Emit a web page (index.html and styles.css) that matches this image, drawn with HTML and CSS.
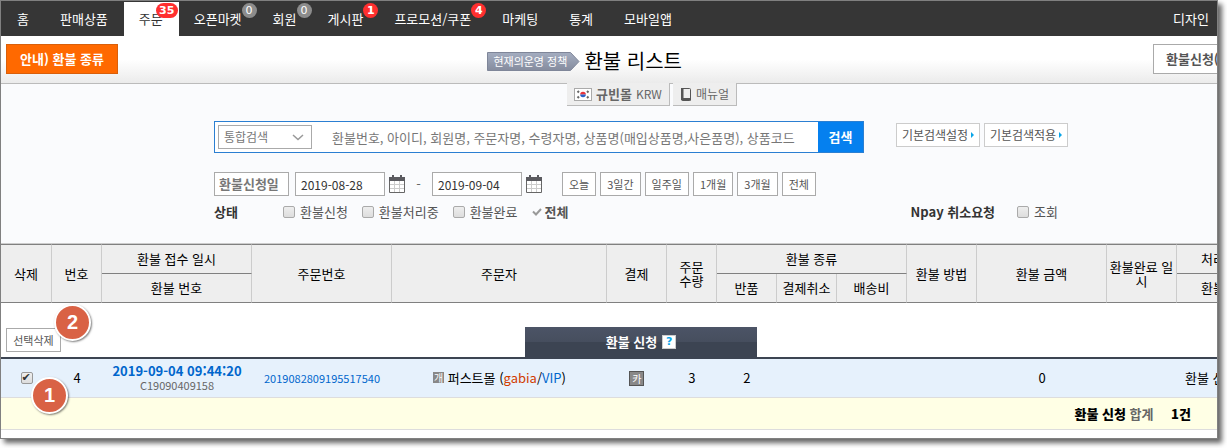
FILE: index.html
```html
<!DOCTYPE html>
<html lang="ko">
<head>
<meta charset="utf-8">
<title>환불 리스트</title>
<link rel="stylesheet" href="styles.css">
</head>
<body>
<div class="frame">
<div class="page">
    <nav class="gnb">
        <a href="#">홈</a>
        <a href="#">판매상품</a>
        <a href="#" class="on">주문<span class="badge red wide">35</span></a>
        <a href="#">오픈마켓<span class="badge">0</span></a>
        <a href="#">회원<span class="badge">0</span></a>
        <a href="#">게시판<span class="badge red">1</span></a>
        <a href="#">프로모션/쿠폰<span class="badge red">4</span></a>
        <a href="#">마케팅</a>
        <a href="#">통계</a>
        <a href="#">모바일앱</a>
        <a href="#" class="design">디자인</a>
    </nav>

    <header class="title-bar">
        <div><button type="button" class="btn-guide">안내) 환불 종류</button></div>
        <div class="title">
            <a href="#" class="policy">
                <svg width="93" height="19" viewBox="0 0 93 19">
                    <defs>
                        <linearGradient id="tag" x1="0" y1="0" x2="0" y2="1">
                            <stop offset="0" stop-color="#a4adc0"/>
                            <stop offset="1" stop-color="#858c9e"/>
                        </linearGradient>
                    </defs>
                    <path d="M.5 .5H83.500L92 9.500L83.500 18.500H.5Z" fill="url(#tag)" stroke="#7f8699"/>
                </svg>
                <span>현재의운영 정책</span>
            </a>
            <h1>환불 리스트</h1>
        </div>
        <div><button type="button" class="btn-refund">환불신청(</button></div>
    </header>

    <section class="filter">
        <div class="tabs">
            <a href="#">
                <svg width="18" height="13" viewBox="0 0 18 13">
                    <rect x=".5" y=".5" width="17" height="12" fill="#fff" stroke="#aaa"/>
                    <path d="M6.200 6.500a2.800 2.800 0 0 1 5.600 0z" fill="#e8343c"/>
                    <path d="M6.200 6.500a2.800 2.800 0 0 0 5.600 0z" fill="#2a62c8"/>
                    <path d="M3.500 4.500L5 3M13 3L14.500 4.500M3.500 8.500L5 10M13 10L14.500 8.500" stroke="#666" stroke-width="2"/>
                </svg>
                <b>규빈몰</b> KRW
            </a>
            <a href="#">
                <svg width="12" height="13" viewBox="0 0 12 13">
                    <rect x="1.500" y=".5" width="9" height="12" rx="1" fill="none" stroke="#555"/>
                    <path d="M1 0h2.500v12H1zM2 10h9v2.500H2z" fill="#555"/>
                </svg>
                매뉴얼
            </a>
        </div>

        <form class="search">
            <div class="row row-keyword">
                <div class="keyword">
                    <span class="pick">
                        <select aria-label="검색 구분"><option>통합검색</option></select>
                        <svg width="12" height="7" viewBox="0 0 12 7"><path d="M1 1l5 4.500L11 1" fill="none" stroke="#999" stroke-width="1.500"/></svg>
                    </span>
                    <input type="text" aria-label="검색어" placeholder="환불번호, 아이디, 회원명, 주문자명, 수령자명, 상품명(매입상품명,사은품명), 상품코드">
                    <button type="button">검색</button>
                </div>
                <div class="presets">
                    <button type="button">기본검색설정<i></i></button>
                    <button type="button">기본검색적용<i></i></button>
                </div>
            </div>

            <div class="row row-date">
                <select class="date-type" aria-label="기간 기준"><option>환불신청일</option></select>
                <div class="date">
                    <input type="text" value="2019-08-28" aria-label="시작일">
                    <svg width="16" height="18" viewBox="0 0 16 18">
                        <path d="M.5 2.500h15v15H.5z" fill="#fff" stroke="#666"/>
                        <path d="M5.500 6v11M10.500 6v11M1 9.500h14M1 13.500h14" stroke="#ccc"/>
                        <path d="M0 2h16v4H0zM3 0h2v3H3zM11 0h2v3h-2z" fill="#5a5a5f"/>
                    </svg>
                </div>
                <span class="dash">-</span>
                <div class="date">
                    <input type="text" value="2019-09-04" aria-label="종료일">
                    <svg width="16" height="18" viewBox="0 0 16 18">
                        <path d="M.5 2.500h15v15H.5z" fill="#fff" stroke="#666"/>
                        <path d="M5.500 6v11M10.500 6v11M1 9.500h14M1 13.500h14" stroke="#ccc"/>
                        <path d="M0 2h16v4H0zM3 0h2v3H3zM11 0h2v3h-2z" fill="#5a5a5f"/>
                    </svg>
                </div>
                <div class="period">
                    <button type="button">오늘</button>
                    <button type="button">3일간</button>
                    <button type="button">일주일</button>
                    <button type="button">1개월</button>
                    <button type="button">3개월</button>
                    <button type="button">전체</button>
                </div>
            </div>

            <div class="row row-status">
                <b class="name">상태</b>
                <div class="checks">
                    <label><input type="checkbox">환불신청</label>
                    <label><input type="checkbox">환불처리중</label>
                    <label><input type="checkbox">환불완료</label>
                    <a href="#" class="all"><svg width="10" height="8" viewBox="0 0 10 8"><path d="M1 3.500L4 6.500L9 1" fill="none" stroke="#999" stroke-width="2"/></svg>전체</a>
                </div>
                <div class="npay">
                    <b>Npay 취소요청</b>
                    <label><input type="checkbox">조회</label>
                </div>
            </div>
        </form>
    </section>

    <table class="list">
        <colgroup>
            <col class="c-del"><col class="c50"><col class="c-reg"><col class="c-order"><col><col class="c60"><col class="c50">
            <col class="c60"><col class="c60"><col class="c70"><col class="c70"><col class="c-price"><col class="c70"><col class="c-state">
        </colgroup>
        <thead>
            <tr>
                <th rowspan="2">삭제</th>
                <th rowspan="2">번호</th>
                <th class="upper">환불 접수 일시</th>
                <th rowspan="2">주문번호</th>
                <th rowspan="2">주문자</th>
                <th rowspan="2">결제</th>
                <th rowspan="2">주문<br>수량</th>
                <th colspan="3" class="upper">환불 종류</th>
                <th rowspan="2">환불 방법</th>
                <th rowspan="2">환불 금액</th>
                <th rowspan="2">환불완료 일<br>시</th>
                <th class="upper state">처리</th>
            </tr>
            <tr>
                <th>환불 번호</th>
                <th>반품</th>
                <th>결제취소</th>
                <th>배송비</th>
                <th class="state">환불</th>
            </tr>
        </thead>
        <tbody>
            <tr class="group">
                <td colspan="14">
                    <div class="group-bar">
                        <div class="marked">
                            <button type="button" class="btn-del">선택삭제</button>
                            <span class="mark mark-del">2</span>
                        </div>
                        <h2>환불 신청 <a href="#">?</a></h2>
                    </div>
                </td>
            </tr>
            <tr class="item">
                <td><div class="marked"><input type="checkbox" checked aria-label="4번 선택"><span class="mark mark-check">1</span></div></td>
                <td>4</td>
                <td class="reg"><a href="#">2019-09-04 09:44:20</a><span>C19090409158</span></td>
                <td class="order-no"><a href="#">2019082809195517540</a></td>
                <td><span class="type">개</span> 퍼스트몰 (<span class="id">gabia</span>/<a href="#">VIP</a>)</td>
                <td><span class="type pay">카</span></td>
                <td>3</td>
                <td>2</td>
                <td></td>
                <td></td>
                <td></td>
                <td>0</td>
                <td></td>
                <td class="state">환불 신청</td>
            </tr>
            <tr class="sum">
                <td colspan="14"><b>환불 신청</b> 합계 <b class="count">1건</b></td>
            </tr>
        </tbody>
    </table>
</div>
</div>
</body>
</html>
```
FILE: styles.css
```css
* {
    box-sizing: border-box;
}

body {
    margin: 0;
    background: #fff;
    font: 13px/14px "Noto Sans CJK KR", sans-serif;
    color: #000;
}

a {
    text-decoration: none;
    color: #0066cc;
}

button, input, select {
    margin: 0;
    padding: 0;
    border: 1px solid #aaa;
    border-radius: 0;
    background: #fff;
    font-family: inherit;
    font-size: 12px;
    line-height: 16px;
    color: #555;
    appearance: none;
    white-space: nowrap;
}

svg {
    flex: none;
}

.frame {
    margin: 0 9px 9px 0;
    padding-bottom: 8px;
    border: 1px solid #808080;
    box-shadow: 4px 4px 5px rgba(0, 0, 0, .6);
    overflow: hidden;
}

/* the admin page is a bit wider than its frame */
.page {
    width: calc(100% + 64px);
}

/* top menu */
.gnb {
    display: flex;
    height: 35px;
    padding: 1px 56px 0 1px;
    background: #363636;
}

.gnb a {
    position: relative;
    padding: 0 16px 0 15px;
    line-height: 33px;
    color: #fff;
}

.gnb a.on {
    background: #fff;
    color: #333;
}

.gnb .design {
    margin-left: auto;
}

.badge {
    position: absolute;
    top: 1px;
    right: 1px;
    width: 15px;
    height: 15px;
    border-radius: 8px;
    background: #8c8c8c;
    font: 11px/15px "DejaVu Sans", sans-serif;
    text-align: center;
    color: #fff;
}

.badge.red {
    background: #ff2f2f;
    font-weight: bold;
}

.badge.wide {
    width: 22px;
}

/* title */
.title-bar {
    display: grid;
    grid-template-columns: 38% 1fr 128px;
    height: 48px;
    padding-top: 8px;
    border-bottom: 1px solid #bbb;
    background: linear-gradient(#fff 50%, #ebebeb);
}

.title-bar button {
    height: 30px;
    font-size: 13px;
    font-weight: bold;
}

.btn-guide {
    width: 112px;
    margin-left: 5px;
    border-color: #d95f0a;
    background: #ff6900;
    color: #fff;
}

.btn-refund {
    width: 120px;
    padding-left: 12px;
    text-align: left;
}

.title {
    display: flex;
    align-items: center;
    gap: 4px;
    height: 34px;
}

.title h1 {
    margin: 0;
    font-size: 20px;
    line-height: 24px;
    font-weight: normal;
}

.policy {
    display: grid;
    align-items: center;
}

.policy svg, .policy span {
    grid-area: 1 / 1;
}

.policy span {
    padding-left: 6px;
    font-size: 11px;
    color: #fff;
}

/* search filter */
.filter {
    height: 159px;
    background: #fafbfd;
}

.tabs {
    display: flex;
    justify-content: center;
    gap: 3px;
    padding-left: 22px;
}

.tabs a {
    display: flex;
    align-items: center;
    gap: 4px;
    height: 23px;
    margin-top: -1px;
    padding: 0 7px;
    border: solid #bbb;
    border-width: 0 1px 1px 0;
    background: #eee;
    font-size: 12px;
    color: #666;
}

.tabs b {
    font-size: 13px;
}

.search {
    width: 854px;
    margin: 15px auto 0;
}

.row {
    display: flex;
}

.row-keyword {
    justify-content: space-between;
    align-items: flex-start;
}

.keyword {
    display: flex;
    align-items: center;
    width: 650px;
    height: 32px;
    padding-left: 3px;
    border: 1px solid #2b7fd2;
    background: #fff;
}

.keyword input {
    flex: 1;
    height: 30px;
    padding-left: 20px;
    border: 0;
    font-size: 13px;
}

.keyword input::placeholder {
    color: #777;
}

.keyword button {
    width: 45px;
    height: 30px;
    border: 0;
    background: #0580ef;
    font-size: 13px;
    font-weight: bold;
    color: #fff;
}

.pick {
    display: grid;
    align-items: center;
}

.pick select, .pick svg {
    grid-area: 1 / 1;
}

.pick select {
    width: 94px;
    height: 24px;
    padding-left: 5px;
    color: #777;
}

.pick svg {
    justify-self: end;
    margin-right: 8px;
    pointer-events: none;
}

.presets {
    display: flex;
    gap: 4px;
    padding-top: 2px;
}

.presets button {
    display: flex;
    align-items: center;
    justify-content: center;
    gap: 3px;
    width: 84px;
    height: 24px;
    border-color: #ccc;
}

.presets i {
    border: solid transparent;
    border-width: 3px 0 3px 3px;
    border-left-color: #0aa5e8;
}

.row-date {
    align-items: center;
    margin-top: 19px;
}

.date-type {
    width: 75px;
    height: 24px;
    margin-right: 6px;
    padding-left: 4px;
    font-size: 13px;
    font-weight: bold;
    color: #777;
}

.date {
    display: flex;
    align-items: center;
    gap: 4px;
}

.date input {
    width: 90px;
    height: 24px;
    padding-left: 5px;
    color: #333;
}

.dash {
    width: 27px;
    text-align: center;
    color: #666;
}

.period {
    display: flex;
    gap: 4px;
    margin-left: 20px;
}

.period button {
    height: 24px;
    padding: 0 6px;
    font-size: 11px;
}

.row-status {
    align-items: center;
    margin-top: 8px;
    line-height: 16px;
    color: #555;
}

.row-status .name {
    width: 69px;
    color: #333;
}

.checks {
    display: flex;
    gap: 14px;
}

.row-status label {
    display: flex;
    align-items: center;
    gap: 5px;
}

.all {
    display: flex;
    align-items: center;
    gap: 3px;
    font-weight: bold;
    color: #555;
}

.npay {
    display: flex;
    gap: 22px;
    margin-left: auto;
    padding-right: 10px;
}

.npay b {
    color: #333;
}

input[type=checkbox] {
    width: 12px;
    height: 12px;
    border-radius: 2px;
    background: linear-gradient(#eee, #ddd);
}

input[type=checkbox]:checked::before {
    content: "✔";
    display: block;
    font: 11px/10px "DejaVu Sans", sans-serif;
    color: #333;
}

/* refund list */
.list {
    width: 100%;
    table-layout: fixed;
    border-spacing: 0;
    border-top: 1px solid #ccc;
}

.c-del { width: 51px; }
.c50 { width: 50px; }
.c60 { width: 60px; }
.c70 { width: 70px; }
.c-reg { width: 150px; }
.c-order { width: 140px; }
.c-price { width: 130px; }
.c-state { width: 104px; }

.list th, .list td {
    padding: 0;
    text-align: center;
}

.list th {
    height: 29px;
    border: solid #ccc;
    border-width: 0 1px 1px 0;
    border-bottom-color: #808080;
    background: #eee;
    font-weight: normal;
}

.list thead tr:first-child th {
    border-top: 1px solid #808080;
}

.list th.upper {
    height: 30px;
}

.list th.state {
    padding-left: 24px;
    text-align: left;
}

.group-bar {
    display: grid;
    grid-template-columns: 1fr 232px 1fr;
    align-items: end;
    height: 54px;
}

.list .group td {
    border-bottom: 2px solid #3c4452;
}

.group h2 {
    display: flex;
    align-items: center;
    justify-content: center;
    gap: 5px;
    height: 30px;
    margin: 0;
    background: linear-gradient(#4c5466, #464e5e 50%, #3c4452 50%);
    font-size: 13px;
    color: #fff;
}

.group h2 a {
    width: 14px;
    height: 14px;
    border: 1px solid #ccc;
    background: #fff;
    font: bold 11px/12px "DejaVu Sans", sans-serif;
    color: #0aa5e8;
}

.marked {
    position: relative;
}

.btn-del {
    display: block;
    width: 55px;
    height: 24px;
    margin: 0 0 5px 5px;
    font-size: 11px;
}

.mark {
    position: absolute;
    width: 37px;
    height: 37px;
    border: 2px solid #fff;
    border-radius: 50%;
    background: #d96245;
    box-shadow: 1px 1px 2px rgba(0, 0, 0, .5);
    font: bold 20px/33px "Liberation Sans", sans-serif;
    text-align: center;
    color: #fff;
}

.mark-del {
    left: 53px;
    bottom: 16px;
}

.mark-check {
    left: 30px;
    top: 5px;
}

.item td {
    height: 39px;
    border-bottom: 1px solid #ddd;
    background: #e6f1fc;
}

.item input {
    display: block;
    margin: 0 auto;
    border-color: #999;
}

.reg a {
    display: block;
    font-weight: bold;
}

.reg span {
    display: block;
    font-size: 11px;
    line-height: 14px;
    color: #666;
}

.order-no {
    font-size: 11px;
}

.id {
    color: #d13c00;
}

.type {
    display: inline-block;
    width: 11px;
    background: #888;
    font-size: 10px;
    line-height: 11px;
    vertical-align: 1px;
    color: #fff;
}

.type.pay {
    width: 15px;
    border: 1px solid #555;
    line-height: 13px;
}

.list .item .state {
    padding-left: 8px;
    text-align: left;
}

.list .sum td {
    height: 32px;
    padding-right: 90px;
    border-bottom: 1px solid #ddd;
    background: #ffffe5;
    font-weight: bold;
    text-align: right;
    color: #666;
}

.sum b {
    color: #000;
}

.sum .count {
    margin-left: 14px;
}
```
